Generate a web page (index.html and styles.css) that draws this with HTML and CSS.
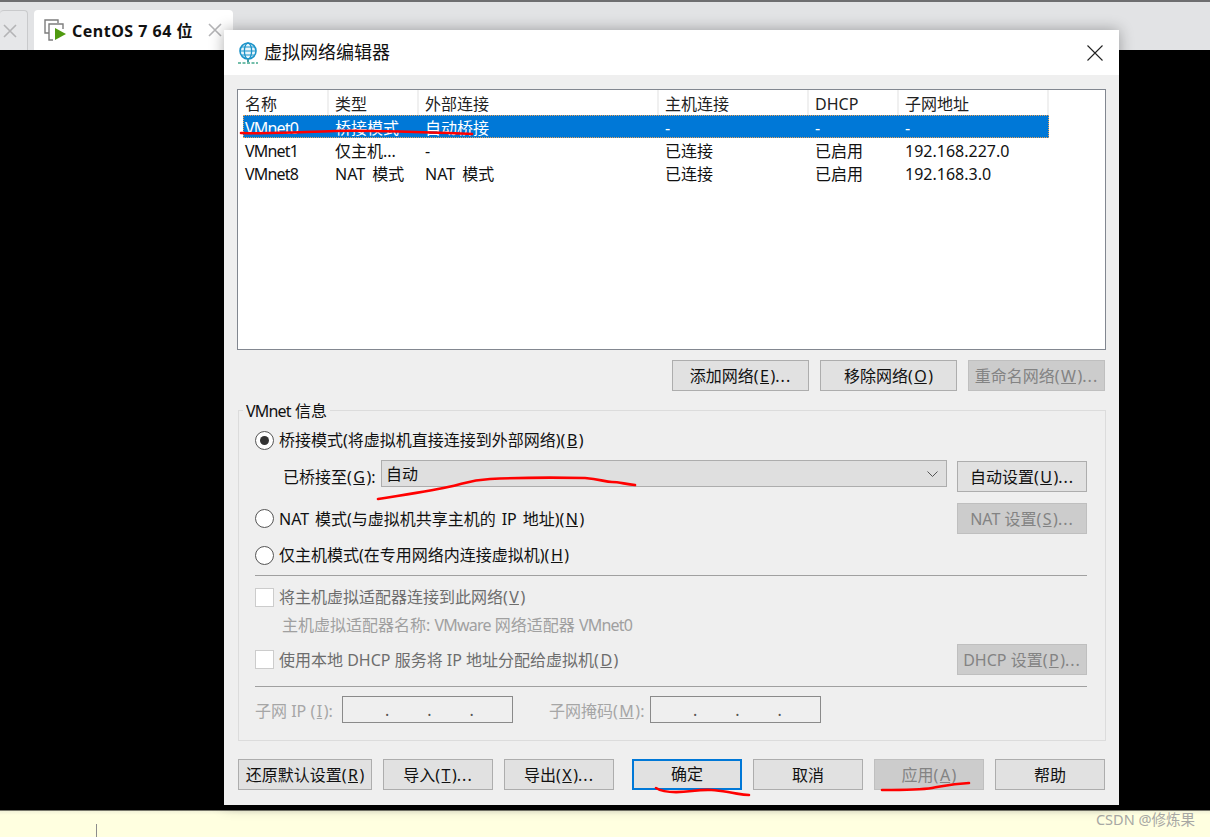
FILE: index.html
```html
<!DOCTYPE html>
<html lang="zh-CN">
<head>
<meta charset="utf-8">
<title>虚拟网络编辑器</title>
<link rel="stylesheet" href="styles.css">
</head>
<body>
<div class="page">
  <header class="topbar">
    <div class="tab tab-prev"><svg class="close" viewBox="0 0 14 14"><path d="M1 1 13 13M13 1 1 13"/></svg></div>
    <div class="tab tab-active">
      <svg class="tab-icon" viewBox="0 0 22 22" width="22" height="22">
        <path class="ic-line" d="M5 14H1V1h13v3"/>
        <path class="ic-line" d="M9 21H5V5h14v5"/>
        <path class="ic-play" d="M11 9 22 15 11 21z"/>
      </svg>
      <span class="tab-title">CentOS 7 64 位</span>
      <svg class="close" viewBox="0 0 14 14"><path d="M1 1 13 13M13 1 1 13"/></svg>
    </div>
  </header>
  <main class="desktop"></main>
  <footer class="statusbar">
    <span class="tick"></span>
    <span class="watermark">CSDN @修炼果</span>
  </footer>

  <section class="dialog">
    <div class="titlebar">
      <svg class="globe" viewBox="0 0 20 22" width="20" height="22">
        <circle cx="10" cy="9" r="8" fill="#e8f5fb" stroke="#1b93c9" stroke-width="1.6"/>
        <ellipse cx="10" cy="9" rx="3.6" ry="8" fill="none" stroke="#1b93c9" stroke-width="1.3"/>
        <path d="M2 9h16M3.2 5h13.6M3.2 13h13.6" fill="none" stroke="#1b93c9" stroke-width="1.2"/>
        <path d="M10 17v3" stroke="#3e9aa5" stroke-width="2"/>
        <path d="M0 21h20" stroke="#45a98f" stroke-width="1.4" stroke-dasharray="3 1.5"/>
      </svg>
      <span class="dialog-title">虚拟网络编辑器</span>
      <svg class="dialog-close" viewBox="0 0 16 16" width="16" height="16"><path d="M.5.5 15.500 15.500M15.500.5 .5 15.500"/></svg>
    </div>
    <div class="dialog-body">
      <div class="list">
        <div class="row row-head">
          <span>名称</span><span>类型</span><span>外部连接</span><span>主机连接</span><span>DHCP</span><span>子网地址</span>
        </div>
        <div class="row row-selected">
          <span class="vm">VMnet0</span><span>桥接模式</span><span>自动桥接</span><span>-</span><span>-</span><span>-</span>
        </div>
        <div class="row">
          <span class="vm">VMnet1</span><span>仅主机...</span><span>-</span><span>已连接</span><span>已启用</span><span>192.168.227.0</span>
        </div>
        <div class="row">
          <span class="vm">VMnet8</span><span class="nat">NAT 模式</span><span class="nat">NAT 模式</span><span>已连接</span><span>已启用</span><span>192.168.3.0</span>
        </div>
      </div>

      <div class="list-actions">
        <button class="btn btn-wide">添加网络(<u>E</u>)<span class="dots">...</span></button>
        <button class="btn btn-wide">移除网络(<u>O</u>)</button>
        <button class="btn btn-wide btn-off">重命名网络(<u>W</u>)<span class="dots">...</span></button>
      </div>

      <div class="group">
        <span class="legend"><span class="vm">VMnet</span> 信息</span>
        <div class="opt opt-first"><span class="radio radio-on"></span><span class="lbl">桥接模式(将虚拟机直接连接到外部网络)(<u>B</u>)</span></div>
        <div class="bridge-row">
          <span class="bridge-label">已桥接至(<u>G</u>):</span>
          <div class="combo"><span class="combo-text">自动</span><svg viewBox="0 0 11 6" width="11" height="6"><path d="M.5.5 5.500 5.500 10.500.5"/></svg></div>
          <button class="btn btn-side">自动设置(<u>U</u>)<span class="dots">...</span></button>
        </div>
        <div class="opt opt-nat"><span class="radio"></span><span class="lbl nat-long">NAT 模式(与虚拟机共享主机的 IP 地址)(<u>N</u>)</span><button class="btn btn-side btn-off push">NAT 设置(<u>S</u>)<span class="dots">...</span></button></div>
        <div class="opt opt-host"><span class="radio"></span><span class="lbl">仅主机模式(在专用网络内连接虚拟机)(<u>H</u>)</span></div>
        <div class="sep sep-a"></div>
        <div class="opt opt-check off"><span class="check"></span><span class="lbl">将主机虚拟适配器连接到此网络(<u>V</u>)</span></div>
        <div class="adapter">主机虚拟适配器名称: <span class="vm">VMware</span> 网络适配器 <span class="vm">VMnet0</span></div>
        <div class="opt opt-dhcp off"><span class="check"></span><span class="lbl">使用本地 DHCP 服务将 IP 地址分配给虚拟机(<u>D</u>)</span><button class="btn btn-side btn-off push">DHCP 设置(<u>P</u>)<span class="dots">...</span></button></div>
        <div class="sep sep-b"></div>
        <div class="subnet">
          <span class="subnet-label-a">子网 IP (<u>I</u>):</span>
          <div class="ip"><i>.</i><i>.</i><i>.</i></div>
          <span class="subnet-label-b">子网掩码(<u>M</u>):</span>
          <div class="ip"><i>.</i><i>.</i><i>.</i></div>
        </div>
      </div>

      <div class="dialog-actions">
        <button class="btn btn-restore">还原默认设置(<u>R</u>)</button>
        <button class="btn">导入(<u>T</u>)<span class="dots">...</span></button>
        <button class="btn">导出(<u>X</u>)<span class="dots">...</span></button>
        <button class="btn btn-default">确定</button>
        <button class="btn">取消</button>
        <button class="btn btn-off">应用(<u>A</u>)</button>
        <button class="btn">帮助</button>
      </div>
    </div>
  </section>

  <svg class="marks" viewBox="0 0 1210 837" width="1210" height="837">
    <path d="M241 133C280 134 300 132 335 131S420 132 472 134"/>
    <path d="M378 499C410 494 430 491 448 487S470 480 490 479 540 477 585 478C600 479 605 482 612 482S625 484 635 485"/>
    <path d="M656 788C664 793 676 793 692 791S716 790 728 792 742 795 749 795"/>
    <path d="M882 790C900 790 920 790 932 788S950 784 969 783"/>
  </svg>
</div>
</body>
</html>
```

FILE: styles.css
```css
* { box-sizing: border-box; }
html, body { margin: 0; padding: 0; background: #000; }
body {
  font-family: "Noto Sans", "Noto Sans CJK SC", sans-serif;
  font-size: 16px;
  color: #111;
}
u { margin: 0 1.5px; }
.vm { letter-spacing: -.8px; }
.dots { letter-spacing: 1px; }
.page {
  position: relative;
  width: 1210px;
  height: 837px;
  overflow: hidden;
  display: flex;
  flex-direction: column;
}
.topbar {
  height: 50px;
  flex: none;
  display: flex;
  align-items: flex-end;
  gap: 6px;
  background: #e2e3e5;
  border-top: 2px solid #6e6e70;
}
.tab {
  height: 40px;
  display: flex;
  align-items: center;
  border-radius: 4px 4px 0 0;
}
.tab-prev {
  width: 28px;
  justify-content: flex-end;
  padding: 0 10px 0 0;
  background: #e6e7e9;
  border: 1px solid #c9cacc;
  border-bottom: 0;
  border-left: 0;
  color: #999;
}
.tab-active {
  width: 199px;
  padding-left: 10px;
  background: #fff;
}
.tab-icon { flex: none; margin-right: 6px; }
.ic-line { fill: none; stroke: #7d7d7d; stroke-width: 1.4; }
.ic-play { fill: #4f9a0f; }
.tab-title {
  font-weight: 700;
  font-size: 16px;
  letter-spacing: .5px;
  white-space: nowrap;
}
.close {
  width: 14px;
  height: 14px;
  flex: none;
}
.close path { fill: none; stroke: #b4b4b6; stroke-width: 1.6; }
.tab-active .close { margin-left: 15px; }
.desktop { flex: 1; background: #000; }
.statusbar {
  height: 27px;
  flex: none;
  display: flex;
  align-items: flex-start;
  justify-content: space-between;
  background: linear-gradient(#f2f2d8 0, #ffffe0 4px);
  border-top: 1px solid #77776a;
}
.tick {
  width: 1px;
  height: 13px;
  margin: 13px 0 0 96px;
  background: #8c8c8c;
}
.watermark {
  margin: 0 15px 0 0;
  font-size: 14.500px;
  line-height: 17px;
  color: #a8a8a4;
}
.dialog {
  position: absolute;
  left: 224px;
  top: 30px;
  width: 895px;
  height: 775px;
  background: #efefef;
  box-shadow: 0 0 14px rgba(0, 0, 0, .32);
}
.titlebar {
  height: 45px;
  display: flex;
  align-items: center;
  padding: 0 16px 0 14px;
  background: #fff;
}
.globe { flex: none; margin-right: 6px; }
.dialog-title { font-size: 18px; margin-bottom: 4px; }
.dialog-close { margin-left: auto; }
.dialog-close path { fill: none; stroke: #222; stroke-width: 1.1; }
.dialog-body { padding: 14px 13px 0; }
.list {
  width: 869px;
  height: 261px;
  border: 1px solid #828790;
  background: #fff;
}
.row {
  display: grid;
  grid-template-columns: 91px 90px 240px 150px 90px 150px;
  height: 23px;
  align-items: start;
  line-height: 27px;
  white-space: nowrap;
}
.row > span { padding-left: 6px; }
.row > span:first-child { padding-left: 7px; }
.row-head { height: 25px; line-height: 29px; color: #222; }
.row-head > span { height: 25px; border-right: 2px solid #f0f0f0; }
.row-selected {
  width: 806px;
  margin-left: 5px;
  grid-template-columns: 86px 90px 240px 150px 90px 150px;
  background: #0078d7;
  color: #fff;
  outline: 1px dotted #e9a25a;
  outline-offset: -1px;
}
.row-selected > span:first-child { padding-left: 2px; }
.nat { word-spacing: 3px; }
.btn {
  height: 31px;
  width: 110px;
  padding: 2px 0 0;
  font: inherit;
  line-height: 27px;
  color: #111;
  background: #e1e1e1;
  border: 1px solid #adadad;
  white-space: nowrap;
}
.btn-wide { width: 137px; }
.btn-side { width: 130px; }
.btn-restore { width: 134px; }
.btn-off {
  background: #ccc;
  border-color: #bfbfbf;
  color: #838383;
}
.btn-default { border: 2px solid #0078d7; margin-left: 7px; padding-top: 0; }
.list-actions {
  display: flex;
  justify-content: flex-end;
  gap: 11px;
  margin-top: 10px;
  padding-right: 1px;
}
.group {
  position: relative;
  width: 868px;
  height: 331px;
  margin: 19px 0 0 1px;
  padding: 0 18px 0 16px;
  border: 1px solid #dcdcdc;
}
.legend {
  position: absolute;
  left: 4px;
  top: -9px;
  padding: 0 3px;
  line-height: 18px;
  background: #efefef;
}
.opt {
  display: flex;
  align-items: center;
  height: 24px;
  white-space: nowrap;
}
.lbl { margin-bottom: 2px; }
.nat-long { word-spacing: 1.700px; }
.radio {
  position: relative;
  flex: none;
  width: 19px;
  height: 19px;
  margin-right: 5px;
  border: 1px solid #555;
  border-radius: 50%;
  background: #fff;
}
.radio-on::after {
  content: "";
  position: absolute;
  left: 4px;
  top: 4px;
  width: 9px;
  height: 9px;
  border-radius: 50%;
  background: #333;
}
.check {
  flex: none;
  width: 19px;
  height: 19px;
  margin-right: 5px;
  border: 1px solid #ccc;
  background: #fff;
}
.push { margin-left: auto; }
.off { color: #6d6d6d; }
.opt-first { margin-top: 17px; }
.bridge-row {
  display: flex;
  align-items: flex-start;
  margin-top: 8px;
  height: 32px;
}
.bridge-row .btn { margin-top: 1px; }
.bridge-label {
  width: 126px;
  padding-left: 28px;
  line-height: 35px;
  white-space: nowrap;
}
.combo {
  width: 566px;
  height: 27px;
  margin-right: 10px;
  padding: 0 8px 0 4px;
  display: flex;
  align-items: center;
  justify-content: space-between;
  background: #dfdfdf;
  border: 1px solid #adadad;
}
.combo-text { margin-bottom: 2px; }
.combo path { fill: none; stroke: #555; stroke-width: 1; }
.opt-nat { margin-top: 11px; height: 31px; }
.opt-host { margin-top: 9px; }
.sep { height: 1px; background: #a0a0a0; }
.sep-a { margin-top: 8px; }
.opt-check { margin-top: 9px; }
.adapter {
  height: 24px;
  margin-top: 4px;
  padding-left: 27px;
  line-height: 24px;
  color: #a0a0a0;
}
.opt-dhcp { margin-top: 7px; height: 31px; }
.sep-b { margin-top: 11px; }
.subnet {
  display: flex;
  align-items: center;
  height: 27px;
  margin-top: 9px;
  color: #a6a6a6;
}
.subnet-label-a { width: 87px; white-space: nowrap; }
.subnet-label-b { width: 101px; margin-left: 36px; white-space: nowrap; }
.ip {
  width: 171px;
  height: 27px;
  display: flex;
  gap: 38px;
  padding-left: 42px;
  line-height: 27px;
  background: #efefef;
  border: 1px solid #8a8a8a;
  color: #555;
}
.ip i { font-style: normal; }
.dialog-actions {
  display: flex;
  gap: 11px;
  margin: 18px 0 0 1px;
}
.marks {
  position: absolute;
  left: 0;
  top: 0;
  pointer-events: none;
}
.marks path {
  fill: none;
  stroke: #f00;
  stroke-width: 2.6;
  stroke-linecap: round;
}
```
